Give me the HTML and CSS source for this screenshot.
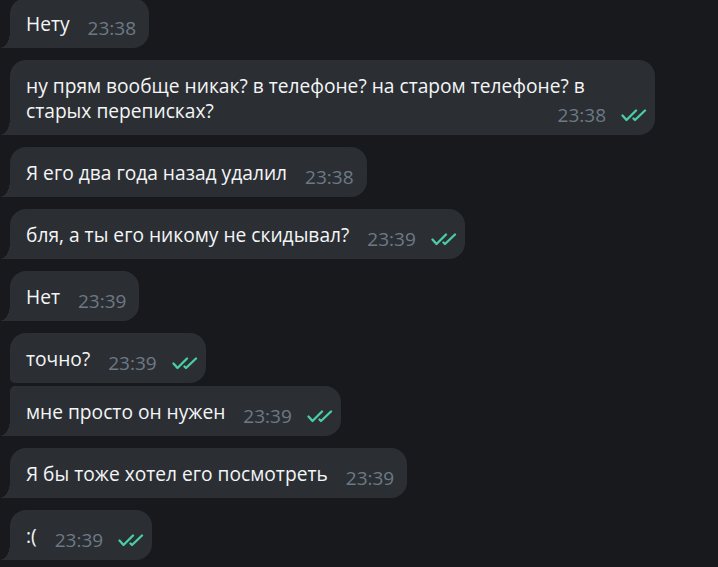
FILE: index.html
```html
<!DOCTYPE html>
<html lang="ru">
<head>
<meta charset="utf-8">
<link rel="stylesheet" href="styles.css">
</head>
<body>
<div class="chat">
  <div class="msg tail"><span class="text">Нету</span><span class="meta"><span class="time">23:38</span></span></div>
  <div class="msg tail read wide"><span class="line">ну прям вообще никак? в телефоне? на старом телефоне? в</span><br><span class="line">старых переписках?</span><span class="meta"><span class="time">23:38</span><svg class="check" viewBox="0 0 26 13" width="26" height="13"><path d="M1.5 6.5 L5.5 11 L15 1.5 M12.5 9.5 L14 11 L24 1.5"/></svg></span></div>
  <div class="msg tail"><span class="text">Я его два года назад удалил</span><span class="meta"><span class="time">23:38</span></span></div>
  <div class="msg tail read"><span class="text">бля, а ты его никому не скидывал?</span><span class="meta"><span class="time">23:39</span><svg class="check" viewBox="0 0 26 13" width="26" height="13"><path d="M1.5 6.5 L5.5 11 L15 1.5 M12.5 9.5 L14 11 L24 1.5"/></svg></span></div>
  <div class="msg tail"><span class="text">Нет</span><span class="meta"><span class="time">23:39</span></span></div>
  <div class="msg read group-first"><span class="text">точно?</span><span class="meta"><span class="time">23:39</span><svg class="check" viewBox="0 0 26 13" width="26" height="13"><path d="M1.5 6.5 L5.5 11 L15 1.5 M12.5 9.5 L14 11 L24 1.5"/></svg></span></div>
  <div class="msg tail read group-last"><span class="text">мне просто он нужен</span><span class="meta"><span class="time">23:39</span><svg class="check" viewBox="0 0 26 13" width="26" height="13"><path d="M1.5 6.5 L5.5 11 L15 1.5 M12.5 9.5 L14 11 L24 1.5"/></svg></span></div>
  <div class="msg tail"><span class="text">Я бы тоже хотел его посмотреть</span><span class="meta"><span class="time">23:39</span></span></div>
  <div class="msg tail read"><span class="text">:(</span><span class="meta"><span class="time">23:39</span><svg class="check" viewBox="0 0 26 13" width="26" height="13"><path d="M1.5 6.5 L5.5 11 L15 1.5 M12.5 9.5 L14 11 L24 1.5"/></svg></span></div>
</div>
</body>
</html>
```

FILE: styles.css
```css
html, body {
  margin: 0;
  height: 100%;
  background: #18191d;
  overflow: hidden;
}

.chat {
  display: flex;
  flex-direction: column;
  align-items: flex-start;
  gap: 12px;
  padding-left: 10px;
  margin-top: -2px;
  font-family: "Open Sans", "Noto Sans", sans-serif;
  font-size: 19.2px;
}

.msg {
  position: relative;
  box-sizing: border-box;
  display: flex;
  align-items: flex-end;
  background: #2b2f34;
  color: #f4f5f6;
  border-radius: 16px;
  padding: 13px 13px 7px 16px;
}

.msg.read {
  padding-right: 8px;
}

.text {
  line-height: 25px;
  padding-bottom: 5px;
}

.meta {
  display: flex;
  align-items: center;
  gap: 15px;
  margin-left: 18px;
  line-height: 25px;
  font-size: 19px;
  color: #6d7985;
  white-space: nowrap;
}

.check {
  display: block;
  fill: none;
  stroke: #4ccea4;
  stroke-width: 2.3;
  stroke-linecap: round;
  stroke-linejoin: round;
}

.tail {
  border-bottom-left-radius: 0;
}

.tail::before {
  content: "";
  position: absolute;
  left: -10px;
  bottom: 0;
  width: 10px;
  height: 16px;
  background: radial-gradient(ellipse 10px 16px at 0 0, transparent 97%, #2b2f34 100%);
}

.wide {
  width: 645px;
  display: flow-root;
  line-height: 25px;
}

.wide .meta {
  float: right;
  margin-top: 5px;
}

.group-first {
  border-bottom-left-radius: 5px;
}

.group-last {
  border-top-left-radius: 5px;
  margin-top: -9px;
}
```
